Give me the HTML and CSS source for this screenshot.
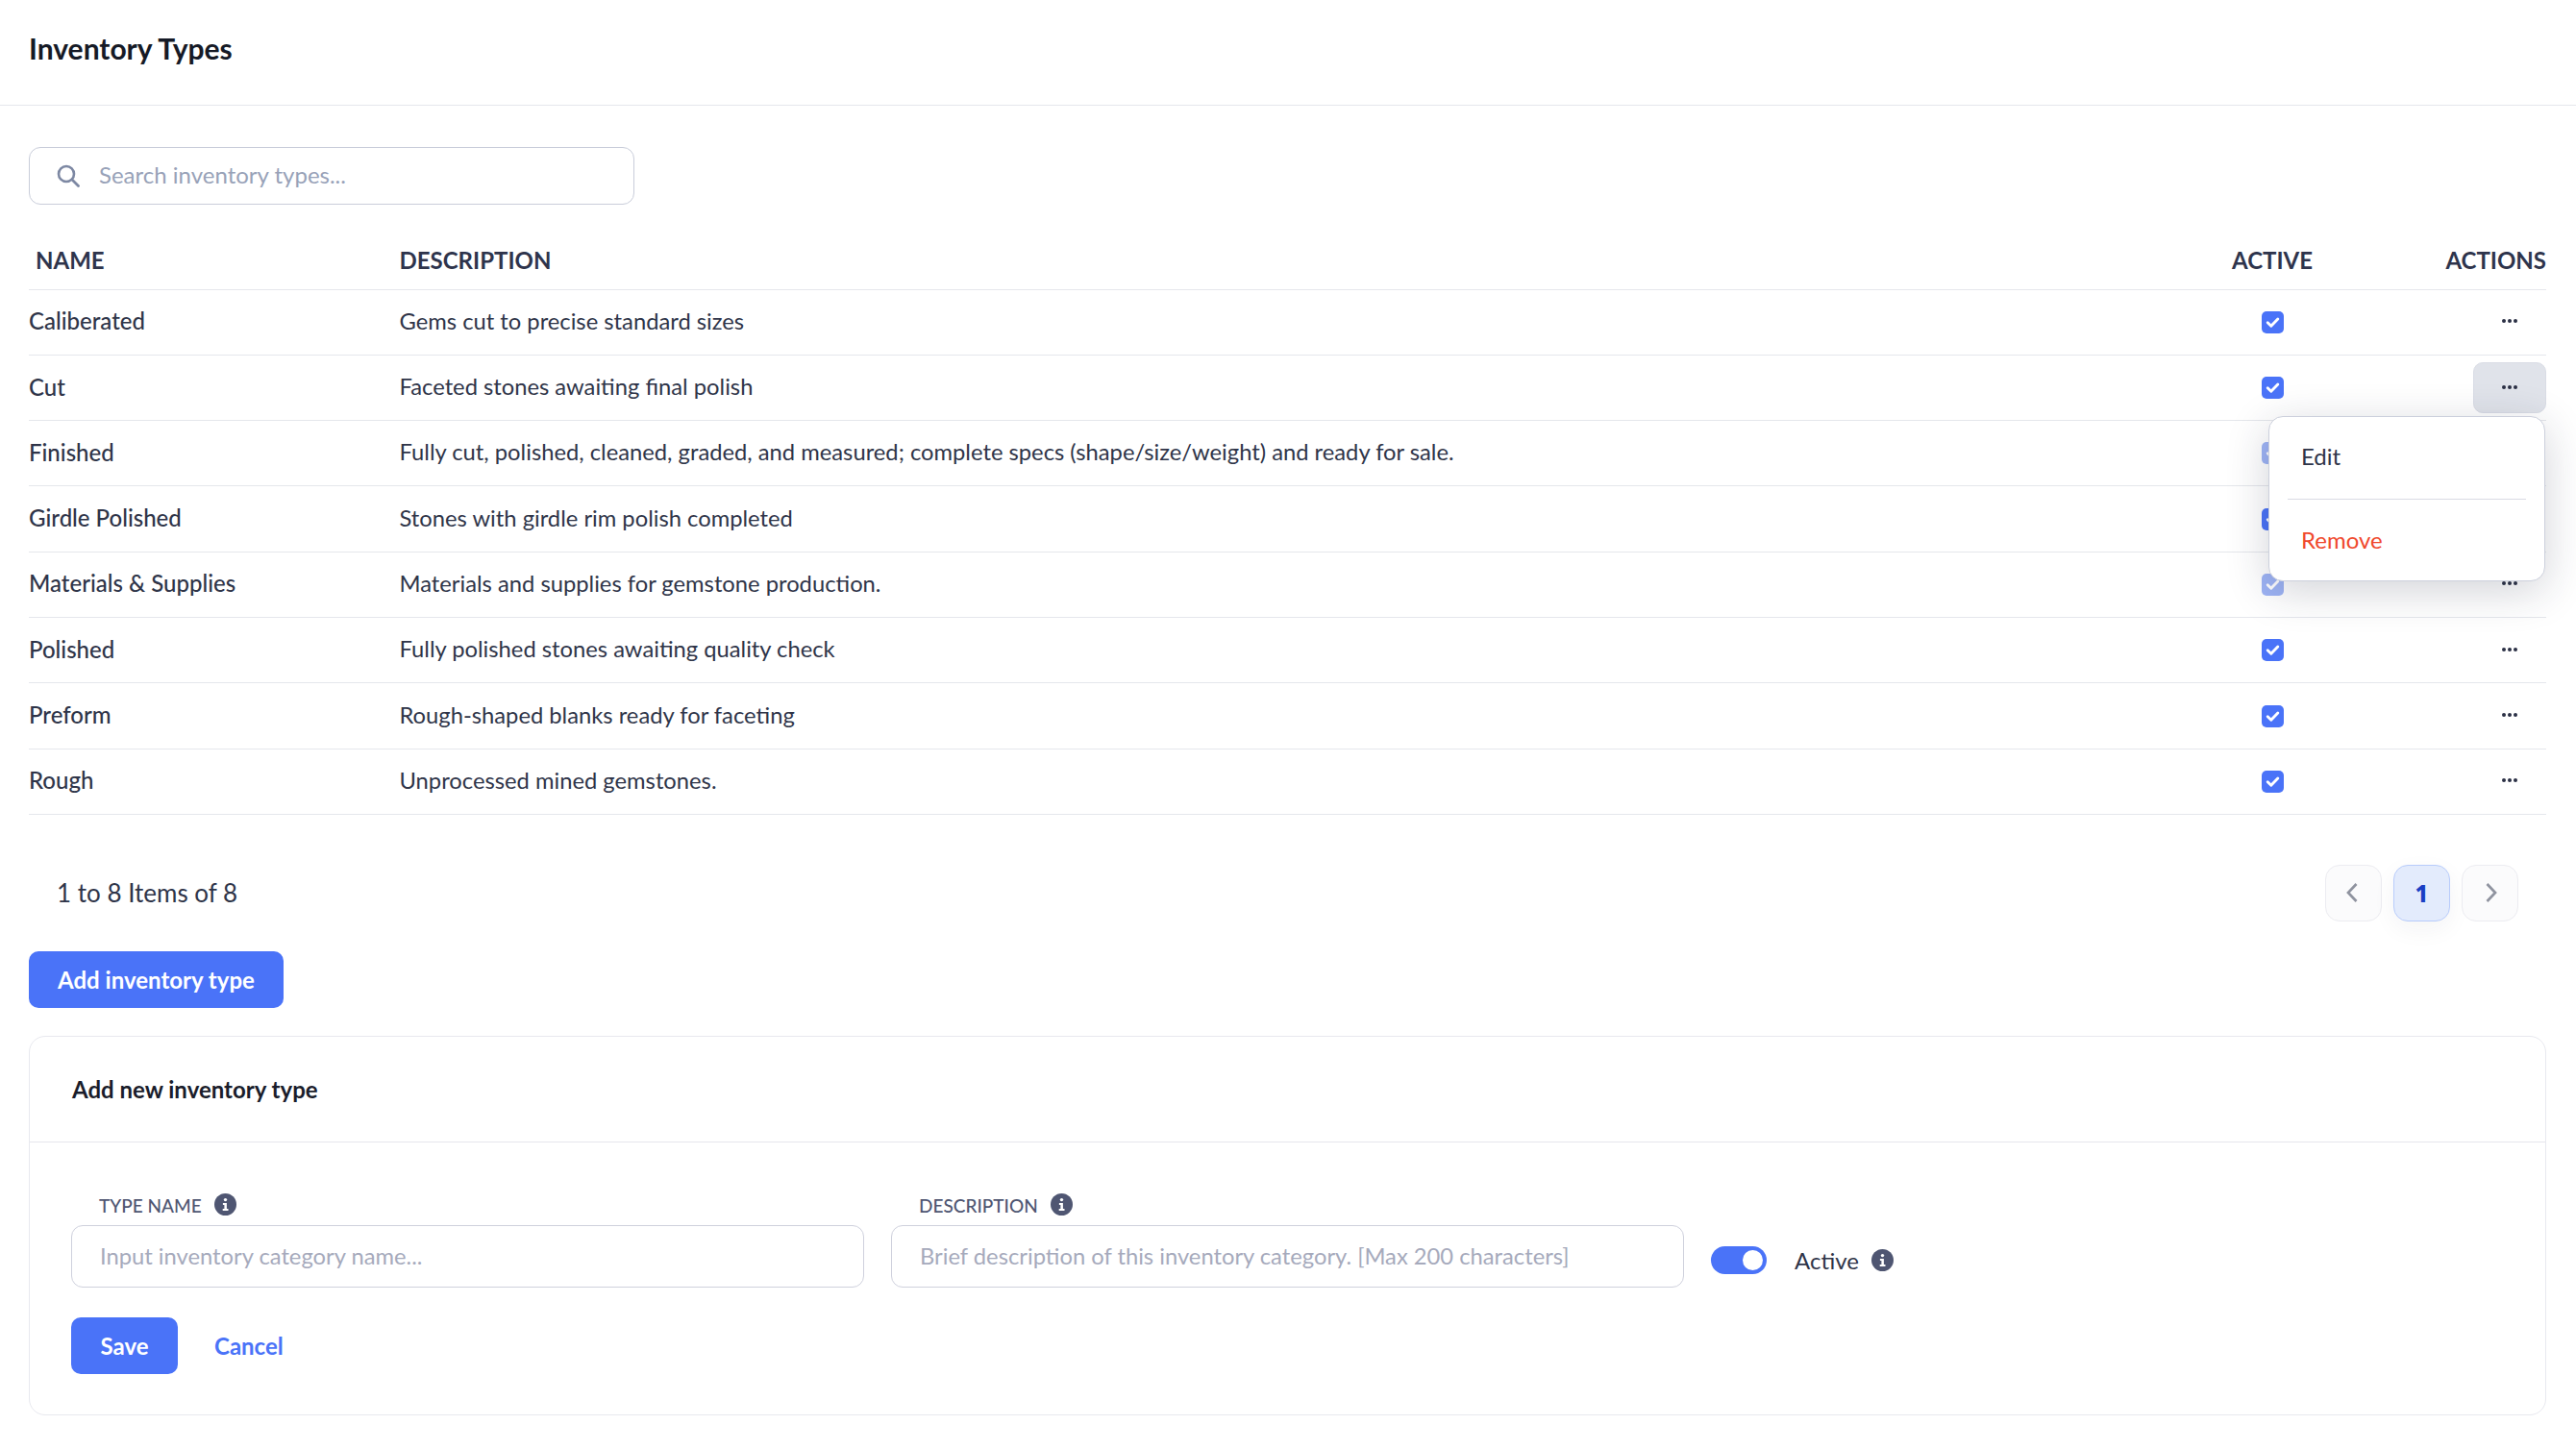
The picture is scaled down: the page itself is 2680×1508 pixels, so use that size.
FILE: index.html
```html
<!DOCTYPE html>
<html lang="en">
<head>
<meta charset="utf-8">
<title>Inventory Types</title>
<link rel="stylesheet" href="styles.css">
</head>
<body>
<svg class="defs" width="0" height="0" aria-hidden="true">
  <symbol id="check" viewBox="0 0 23 23">
    <rect width="23" height="23" rx="5" fill="currentColor"/>
    <path d="M6.2 11.8l3.6 3.5 7-7.2" fill="none" stroke="#fff" stroke-width="2.9" stroke-linecap="round" stroke-linejoin="round"/>
  </symbol>
  <symbol id="info" viewBox="0 0 23 23">
    <circle cx="11.5" cy="11.5" r="11.5" fill="#4f5672"/>
    <circle cx="11.5" cy="6.6" r="1.7" fill="#fff"/>
    <path d="M8.9 10h4v6h1.6v2H8.7v-2h1.7v-4H8.9z" fill="#fff"/>
  </symbol>
  <symbol id="dots" viewBox="0 0 16 4">
    <circle cx="2" cy="2" r="2" fill="#2b3045"/><circle cx="8" cy="2" r="2" fill="#2b3045"/><circle cx="14" cy="2" r="2" fill="#2b3045"/>
  </symbol>
</svg>
<header class="topbar"><h1>Inventory Types</h1></header>
<main class="content">
  <label class="search">
    <svg class="search-icon" viewBox="0 0 24 24"><circle cx="10" cy="10" r="8" fill="none" stroke="#7d88a3" stroke-width="2.6"/><path d="M16 16l6.5 6.5" stroke="#7d88a3" stroke-width="2.8" stroke-linecap="round"/></svg>
    <input type="text" placeholder="Search inventory types...">
  </label>

  <section class="table">
    <div class="row head">
      <div class="name">NAME</div><div>DESCRIPTION</div><div class="center">ACTIVE</div><div class="end">ACTIONS</div>
    </div>
    <div class="row"><div class="cell">Caliberated</div><div class="cell desc">Gems cut to precise standard sizes</div><div class="center"><svg class="cb"><use href="#check"/></svg></div><div class="end"><button class="more"><svg class="dots"><use href="#dots"/></svg></button></div></div>
    <div class="row"><div class="cell">Cut</div><div class="cell desc">Faceted stones awaiting final polish</div><div class="center"><svg class="cb"><use href="#check"/></svg></div><div class="end anchor"><button class="more open"><svg class="dots"><use href="#dots"/></svg></button>
      <div class="menu"><div class="menu-item">Edit</div><div class="menu-item danger">Remove</div></div></div></div>
    <div class="row"><div class="cell">Finished</div><div class="cell desc">Fully cut, polished, cleaned, graded, and measured; complete specs (shape/size/weight) and ready for sale.</div><div class="center"><svg class="cb dim"><use href="#check"/></svg></div><div class="end"><button class="more"><svg class="dots"><use href="#dots"/></svg></button></div></div>
    <div class="row"><div class="cell">Girdle Polished</div><div class="cell desc">Stones with girdle rim polish completed</div><div class="center"><svg class="cb"><use href="#check"/></svg></div><div class="end"><button class="more"><svg class="dots"><use href="#dots"/></svg></button></div></div>
    <div class="row"><div class="cell">Materials &amp; Supplies</div><div class="cell desc">Materials and supplies for gemstone production.</div><div class="center"><svg class="cb dim"><use href="#check"/></svg></div><div class="end"><button class="more"><svg class="dots"><use href="#dots"/></svg></button></div></div>
    <div class="row"><div class="cell">Polished</div><div class="cell desc">Fully polished stones awaiting quality check</div><div class="center"><svg class="cb"><use href="#check"/></svg></div><div class="end"><button class="more"><svg class="dots"><use href="#dots"/></svg></button></div></div>
    <div class="row"><div class="cell">Preform</div><div class="cell desc">Rough-shaped blanks ready for faceting</div><div class="center"><svg class="cb"><use href="#check"/></svg></div><div class="end"><button class="more"><svg class="dots"><use href="#dots"/></svg></button></div></div>
    <div class="row"><div class="cell">Rough</div><div class="cell desc">Unprocessed mined gemstones.</div><div class="center"><svg class="cb"><use href="#check"/></svg></div><div class="end"><button class="more"><svg class="dots"><use href="#dots"/></svg></button></div></div>
  </section>

  <div class="pager-bar">
    <span class="count">1 to 8 Items of 8</span>
    <nav class="pager">
      <button class="page"><svg class="prev" viewBox="0 0 14 22"><path d="M11.5 2L3 11l8.5 9" fill="none" stroke="#8f939f" stroke-width="2.7"/></svg></button>
      <button class="page current">1</button>
      <button class="page"><svg class="next" viewBox="0 0 14 22"><path d="M2.5 2L11 11l-8.5 9" fill="none" stroke="#8f939f" stroke-width="2.7"/></svg></button>
    </nav>
  </div>

  <button class="btn add">Add inventory type</button>

  <section class="card">
    <h2>Add new inventory type</h2>
    <div class="card-body">
      <div class="fields">
        <div class="field">
          <div class="label">TYPE NAME <svg class="info"><use href="#info"/></svg></div>
          <input type="text" placeholder="Input inventory category name...">
        </div>
        <div class="field">
          <div class="label">DESCRIPTION <svg class="info"><use href="#info"/></svg></div>
          <input type="text" placeholder="Brief description of this inventory category. [Max 200 characters]">
        </div>
        <div class="active-field">
          <span class="toggle"><span class="knob"></span></span>
          <span class="active-label">Active</span>
          <svg class="info"><use href="#info"/></svg>
        </div>
      </div>
      <div class="actions">
        <button class="btn save">Save</button>
        <button class="link">Cancel</button>
      </div>
    </div>
  </section>
</main>
</body>
</html>
```
FILE: styles.css
```css
* { box-sizing: border-box; }
html, body { margin: 0; padding: 0; background: #fff; }
body { font-family: "Lato", "Noto Sans", sans-serif; font-size: 24px; color: #2f3549; overflow: hidden; height: 1508px; }
button, input { font: inherit; }
.defs { position: absolute; }

.topbar { height: 110px; border-bottom: 1px solid #e5e7ec; padding-left: 30px; display: flex; align-items: center; padding-bottom: 10px; }
.topbar h1 { margin: 0; font-size: 30px; font-weight: 700; color: #161a26; }

.content { padding: 43px 31px 0 30px; }

.search { display: flex; align-items: center; width: 630px; height: 60px; border: 1px solid #c9cdda; border-radius: 12px; padding-left: 28px; gap: 20px; }
.search-icon { width: 24px; height: 24px; flex: none; }
.search input { border: 0; outline: 0; flex: 1; min-width: 0; padding: 0 0 3px; color: #2f3549; background: transparent; }
input::placeholder { color: #98a2b8; opacity: 1; }

.table { margin-top: 20px; }
.row { display: grid; grid-template-columns: 385.5px 1fr 120px 225px; align-items: center; height: 68.3px; border-bottom: 1px solid #e5e7ec; font-weight: 500; }
.cell { padding-bottom: 3px; }
.row .desc { font-weight: 400; font-size: 23.75px; }
.row.head { font-weight: 700; color: #2e344c; height: 68.6px; padding-top: 7px; }
.head .name { padding-left: 7px; }
.center { display: flex; justify-content: center; }
.end { display: flex; justify-content: flex-end; }
.anchor { position: relative; }

.cb { width: 23px; height: 23px; color: #4a73f8; display: block; }
.cb.dim { color: #9eb4f5; }
.more { width: 76px; height: 53px; border: 1px solid transparent; border-radius: 10px; background: transparent; padding: 0; display: flex; align-items: center; justify-content: center; }
.more.open { background: #e0e3ea; border-color: #d9dce5; }
.dots { width: 16px; height: 4px; display: block; margin-top: -2px; }

.menu { position: absolute; top: 56px; right: 1px; width: 288px; height: 172px; background: #fff; border: 1px solid #ccd0dc; border-radius: 15px; box-shadow: 0 10px 45px rgba(30, 35, 60, .2); z-index: 5; padding: 0 19px; }
.menu-item { height: 86px; display: flex; align-items: center; padding: 0 0 4px 14px; font-weight: 400; }
.menu-item:first-child { border-bottom: 1px solid #d9dbe4; }
.menu-item.danger { color: #f0492d; }

.pager-bar { display: flex; justify-content: space-between; align-items: center; height: 59px; margin-top: 51.8px; padding: 0 29px; }
.count { font-size: 26px; }
.pager { display: flex; gap: 12px; }
.page { width: 59px; height: 59px; border: 1px solid #ececf1; border-radius: 15px; background: #fbfbfc; padding: 0; display: flex; align-items: center; justify-content: center; }
.page svg { width: 14px; height: 22px; }
.page .prev { margin-right: 3px; }
.page .next { margin-left: 3px; }
.page.current { background: #e3ebfc; border-color: #b8ccfb; color: #1a3fc4; font-weight: 800; font-family: "Noto Sans", sans-serif; box-shadow: 0 8px 24px rgba(30, 35, 60, .05); }

.btn { background: #4a73f8; color: #fff; border: 0; border-radius: 10px; font-weight: 700; padding: 0; height: 59px; }
.add { display: block; width: 265px; margin-top: 31px; }

.card { margin-top: 29px; height: 395px; border: 1px solid #e8e9ef; border-radius: 17px; }
.card h2 { margin: 0; font-size: 24px; font-weight: 700; color: #1a1d2b; height: 110px; padding-left: 44px; display: flex; align-items: center; border-bottom: 1px solid #e5e7ec; }
.card-body { padding: 0 43px; }
.fields { display: flex; align-items: flex-end; gap: 28px; padding-top: 53px; }
.field { width: 825px; }
.label { display: flex; align-items: center; gap: 13px; height: 24px; font-size: 19px; font-weight: 500; color: #4f5672; padding: 2px 0 0 29px; margin-bottom: 9px; }
.label .info { margin-top: -3px; }
.info { width: 23px; height: 23px; display: block; flex: none; }
.field input { display: block; width: 100%; height: 65px; border: 1px solid #cfd1dd; border-radius: 12px; padding: 0 29px 1px; outline: 0; font-size: 23.75px; }
.field input::placeholder { color: #a6aabc; }
.active-field { display: flex; align-items: center; height: 60px; margin-bottom: -2px; }
.toggle { width: 58px; height: 29px; border-radius: 15px; background: #4a73f8; display: flex; align-items: center; justify-content: flex-end; padding-right: 4px; }
.knob { width: 21px; height: 21px; border-radius: 50%; background: #fff; }
.active-label { margin: 0 13px 0 29px; }
.actions { display: flex; align-items: center; margin-top: 31px; gap: 38px; }
.save { width: 111px; }
.link { border: 0; background: none; color: #4a73f8; font-weight: 700; padding: 0; }
```
